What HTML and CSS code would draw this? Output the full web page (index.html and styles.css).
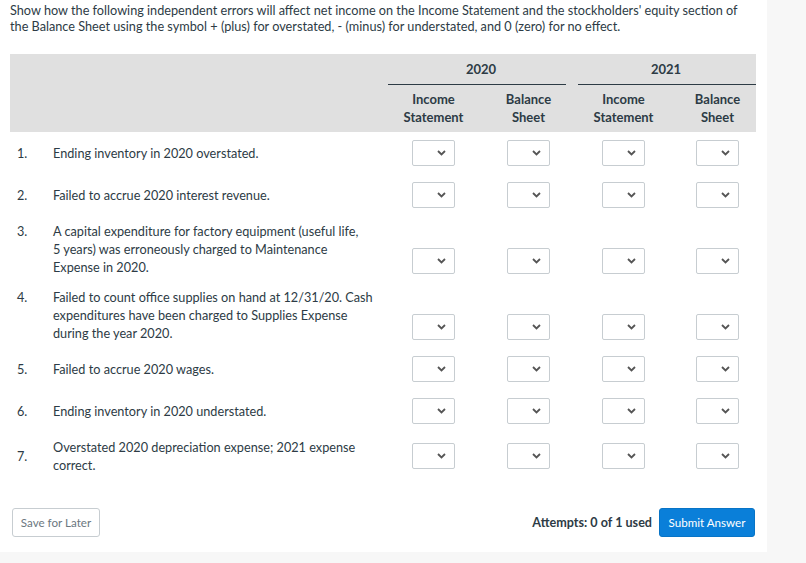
FILE: index.html
```html
<!DOCTYPE html>
<html lang="en">
<head>
  <meta charset="UTF-8">
  <title>Independent Errors</title>
  <meta name="viewport" content="width=device-width, initial-scale=1">
  <link rel="stylesheet" href="styles.css">
</head>
<body>

<main class="panel">
  <p class="prompt">Show how the following independent errors will affect net income on the Income Statement and the stockholders' equity section of the Balance Sheet using the symbol + (plus) for overstated, - (minus) for understated, and 0 (zero) for no effect.</p>

  <table class="grid">
    <colgroup>
      <col class="c-num">
      <col class="c-desc">
      <col class="c-sel">
      <col class="c-sel">
      <col class="c-sel">
      <col class="c-last">
    </colgroup>
    <thead>
      <tr class="years">
        <th colspan="2"></th>
        <th colspan="2"><span>2020</span><div class="rule rule-a"></div></th>
        <th colspan="2"><span>2021</span><div class="rule rule-b"></div></th>
      </tr>
      <tr class="heads">
        <th colspan="2"></th>
        <th>Income<br>Statement</th>
        <th>Balance<br>Sheet</th>
        <th>Income<br>Statement</th>
        <th class="last">Balance<br>Sheet</th>
      </tr>
    </thead>
    <tbody id="rows"></tbody>
  </table>

  <div class="footer">
    <button class="btn-save">Save for Later</button>
    <div class="submit-wrap">
      <span class="attempts">Attempts: 0 of 1 used</span>
      <button class="btn-submit">Submit Answer</button>
    </div>
  </div>
</main>

<script>
  const errors = [
    ['Ending inventory in 2020 overstated.', ''],
    ['Failed to accrue 2020 interest revenue.', ''],
    ['A capital expenditure for factory equipment (useful life, 5&nbsp;years) was erroneously charged to Maintenance Expense&nbsp;in&nbsp;2020.', 'long'],
    ['Failed to count office supplies on hand at 12/31/20. Cash expenditures have been charged to Supplies Expense during the year 2020.', 'long'],
    ['Failed to accrue 2020 wages.', ''],
    ['Ending inventory in 2020 understated.', ''],
    ['Overstated 2020 depreciation expense; 2021 expense correct.', '']
  ];

  const chevron = '<svg class="chev" width="9" height="6" viewBox="0 0 9 6"><path d="M1 1l3.5 3.5L8 1" fill="none" stroke="#555" stroke-width="1.8"/></svg>';

  function selectCell(extra) {
    return `<td class="sel ${extra}"><span class="pick"><select><option></option><option>+</option><option>-</option><option>0</option></select>${chevron}</span></td>`;
  }

  const body = document.getElementById('rows');
  errors.forEach(([text, kind], i) => {
    const tr = document.createElement('tr');
    tr.className = kind;
    tr.innerHTML = `<td class="num">${i + 1}.</td><td class="desc">${text}</td>` +
      selectCell('') + selectCell('') + selectCell('') + selectCell('last');
    body.appendChild(tr);
  });
</script>

</body>
</html>
```

FILE: styles.css
```css
html { background: #f7f7f7; }
body {
  margin: 0;
  font-family: Lato, "Open Sans", sans-serif;
  color: #2d3b45;
}

.panel {
  width: 747px;
  padding: 2px 10px 15px 10px;
  background: #fff;
}

.prompt {
  margin: 0;
  font-size: 12.7px;
  line-height: 16px;
}

.grid {
  margin-top: 20px;
  width: 746px;
  border-collapse: collapse;
  table-layout: fixed;
  font-size: 12.7px;
}
.c-num { width: 43px; }
.c-desc { width: 333px; }
.c-sel { width: 95px; }
.c-last { width: 85px; }

thead { background: #e0e0e0; }
thead th { font-weight: 700; text-align: center; padding: 0; font-size: 13px; }

.years th { padding-top: 6px; line-height: 18px; }
.rule { border-bottom: 1px solid #2d3b45; margin-top: 6px; }
.rule-a { margin-right: 10px; margin-left: 2px; }
.rule-b { margin-left: 2px; }

.heads th { padding: 6px 0; line-height: 17.5px; }
.heads th.last { padding-left: 8px; }

td { padding: 0; vertical-align: middle; }
.num { padding-left: 7px; }
.desc { padding: 6px 8px 6px 0; line-height: 18px; }
.sel { padding: 8px 0; text-align: center; }
.sel.last { padding-left: 8px; }

.long .num { vertical-align: top; padding-top: 6px; line-height: 18px; }
.long .sel { vertical-align: bottom; }

.pick {
  position: relative;
  display: inline-block;
  vertical-align: middle;
}
.pick select {
  appearance: none;
  -webkit-appearance: none;
  display: block;
  width: 43px;
  height: 26px;
  border: 1px solid #c7cdd1;
  border-radius: 2px;
  background: #fff;
  font: inherit;
}
.chev {
  position: absolute;
  right: 9px;
  top: 10px;
  pointer-events: none;
}

.footer {
  margin-top: 28px;
  display: flex;
  justify-content: space-between;
  align-items: center;
  padding: 0 2px;
}
.submit-wrap { display: flex; align-items: center; gap: 7px; }

.btn-save,
.btn-submit {
  height: 29px;
  border-radius: 3px;
  font-family: Lato, "Open Sans", sans-serif;
  font-size: 11.6px;
  padding: 0;
  white-space: nowrap;
}
.btn-save {
  width: 88px;
  background: #fff;
  border: 1px solid #c7cdd1;
  color: #6b7780;
}
.btn-submit {
  width: 96px;
  background: #0a7fd9;
  border: 1px solid #0874c6;
  color: #fff;
}
.attempts { font-size: 12.6px; font-weight: 700; }
```
